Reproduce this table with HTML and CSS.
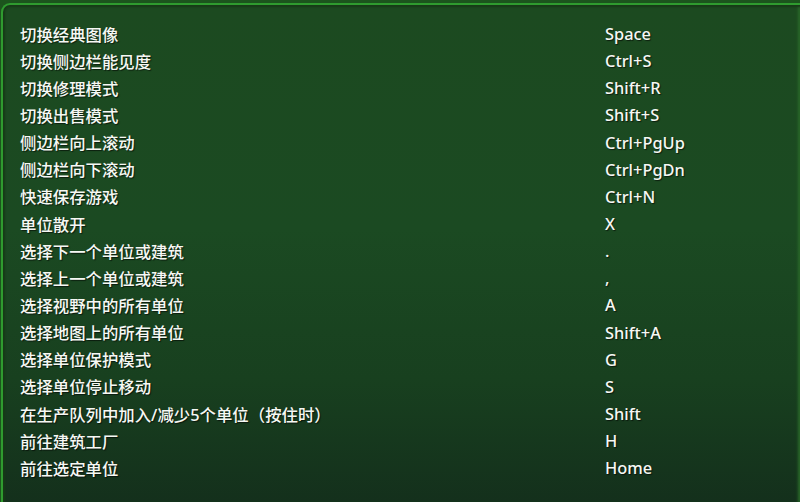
FILE: index.html
```
<!DOCTYPE html>
<html lang="zh-CN">
<head>
<meta charset="utf-8">
<link rel="stylesheet" href="styles.css">
</head>
<body>
<div class="frame">
  <div class="panel">
    <div class="list">
      <div class="row"><span class="label">切换经典图像</span><span class="key">Space</span></div>
      <div class="row"><span class="label">切换侧边栏能见度</span><span class="key">Ctrl+S</span></div>
      <div class="row"><span class="label">切换修理模式</span><span class="key">Shift+R</span></div>
      <div class="row"><span class="label">切换出售模式</span><span class="key">Shift+S</span></div>
      <div class="row"><span class="label">侧边栏向上滚动</span><span class="key">Ctrl+PgUp</span></div>
      <div class="row"><span class="label">侧边栏向下滚动</span><span class="key">Ctrl+PgDn</span></div>
      <div class="row"><span class="label">快速保存游戏</span><span class="key">Ctrl+N</span></div>
      <div class="row"><span class="label">单位散开</span><span class="key">X</span></div>
      <div class="row"><span class="label">选择下一个单位或建筑</span><span class="key">.</span></div>
      <div class="row"><span class="label">选择上一个单位或建筑</span><span class="key">,</span></div>
      <div class="row"><span class="label">选择视野中的所有单位</span><span class="key">A</span></div>
      <div class="row"><span class="label">选择地图上的所有单位</span><span class="key">Shift+A</span></div>
      <div class="row"><span class="label">选择单位保护模式</span><span class="key">G</span></div>
      <div class="row"><span class="label">选择单位停止移动</span><span class="key">S</span></div>
      <div class="row"><span class="label">在生产队列中加入/减少5个单位（按住时）</span><span class="key">Shift</span></div>
      <div class="row"><span class="label">前往建筑工厂</span><span class="key">H</span></div>
      <div class="row"><span class="label">前往选定单位</span><span class="key">Home</span></div>
    </div>
  </div>
</div>
</body>
</html>
```
FILE: styles.css
```
html, body {
  margin: 0;
  padding: 0;
  width: 800px;
  height: 502px;
  overflow: hidden;
  background: #173a1d;
}
.frame {
  height: 502px;
  box-sizing: border-box;
  padding: 3px 0 0 1px;
  background: #1c541d;
}
.panel {
  height: 100%;
  box-sizing: border-box;
  border-top: 2px solid #2f9b2f;
  border-left: 2px solid #2f9b2f;
  border-top-left-radius: 9px;
  background: linear-gradient(180deg, #1c4a20 0%, #1b4a22 45%, #18401f 75%, #14301c 100%);
  box-shadow: inset 0 3px 2px -1px #183a18, inset 3px 0 2px -1px #183a18, inset -4px 0 3px -2px #2a6a2a;
  padding: 15px 0 0 17px;
}
.list {
  display: flex;
  flex-direction: column;
}
.row {
  display: grid;
  grid-template-columns: 585px 1fr;
  height: 27.15px;
  align-items: center;
  font-family: "Noto Sans", "Noto Sans CJK SC", sans-serif;
  font-size: 16.4px;
  font-weight: 500;
  color: #f6f8f4;
  text-shadow: 1px 1px 1px rgba(0, 0, 0, 0.6);
  white-space: nowrap;
}
```
